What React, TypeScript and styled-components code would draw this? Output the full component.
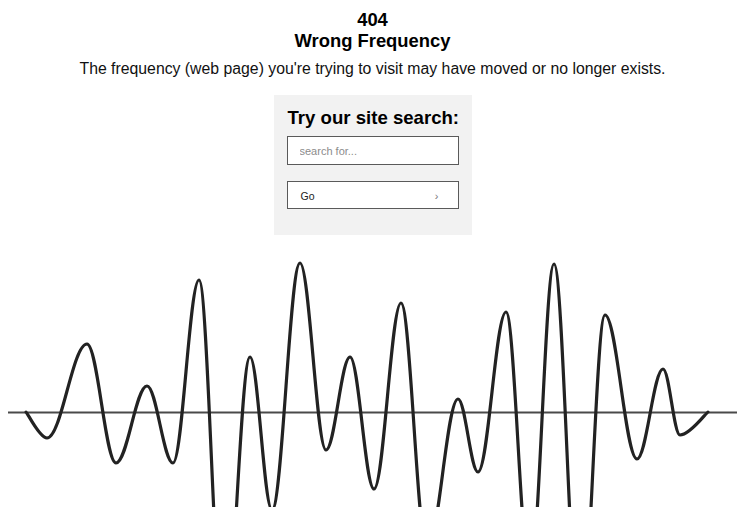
import React from "react";
import styled, { createGlobalStyle } from "styled-components";

const Global = createGlobalStyle`
  html, body { background: #fff; }
  body {
    margin: 8px;
    font-family: "Liberation Sans", Arial, sans-serif;
    color: #000;
  }
`;

const Page = styled.main`
  display: flex;
  flex-direction: column;
  align-items: center;
  padding-top: 2px;
`;

const Title = styled.h1<{ $gap?: number }>`
  margin: ${(p) => p.$gap ?? 0}px 0 0;
  font-size: 18.4px;
  line-height: 20px;
  font-weight: bold;
  text-align: center;
`;

const Lead = styled.p`
  margin: 9px 0 0;
  font-size: 15.8px;
  line-height: 18.4px;
  color: #111;
  text-align: center;
`;

const SearchBox = styled.form`
  margin-top: 17px;
  width: 198px;
  box-sizing: border-box;
  padding: 13px 13px 26px;
  background: #f2f2f2;
  display: flex;
  flex-direction: column;
`;

const SearchTitle = styled.h2`
  margin: 0 0 0 1px;
  font-size: 18.6px;
  line-height: 20px;
  font-weight: bold;
  white-space: nowrap;
`;

const Field = styled.input`
  margin-top: 8px;
  height: 29px;
  box-sizing: border-box;
  border: 1px solid #5a5a5a;
  background: #fff;
  padding: 1px 12px 0;
  font-family: inherit;
  font-size: 11px;
  color: #222;
  outline: none;
  &::placeholder { color: #8c8c8c; }
`;

const GoButton = styled.button`
  margin-top: 16px;
  height: 28px;
  box-sizing: border-box;
  border: 1px solid #5a5a5a;
  background: #fff;
  padding: 2px 19px 0 13px;
  display: flex;
  align-items: center;
  justify-content: space-between;
  font-family: inherit;
  font-size: 10.5px;
  color: #222;
  cursor: pointer;
`;

const Chevron = styled.span`
  color: #777;
  font-size: 11px;
`;

const WaveSvg = styled.svg`
  display: block;
  margin-top: 10px;
  width: 729px;
  height: 262px;
  align-self: stretch;
`;

const extrema: [number, number][] = [
  [26, 412], [47, 438], [87, 344], [116, 463], [147, 386], [173, 463],
  [199, 280], [224, 640], [250, 357], [272, 510], [300, 263], [326, 450],
  [350, 357], [374, 489], [401, 303], [427, 550], [458, 399], [478, 472],
  [506, 312], [530, 575], [554, 264], [580, 640], [605, 315], [637, 459],
  [663, 369], [680, 435], [708, 412],
];

function buildPath(pts: [number, number][]): string {
  let d = `M${pts[0][0]} ${pts[0][1]}`;
  for (let i = 1; i < pts.length; i++) {
    const [x0, y0] = pts[i - 1];
    const [x1, y1] = pts[i];
    const dx = x1 - x0;
    const a = i === 1 ? 0.05 : 0.364;
    const b = i === pts.length - 1 ? 0.05 : 0.364;
    d += ` C${(x0 + a * dx).toFixed(2)} ${y0} ${(x1 - b * dx).toFixed(2)} ${y1} ${x1} ${y1}`;
  }
  return d;
}

export default function App() {
  const d = buildPath(extrema);
  return (
    <>
      <Global />
      <Page>
        <Title>404</Title>
        <Title as="h2" $gap={1}>Wrong Frequency</Title>
        <Lead>The frequency (web page) you're trying to visit may have moved or no longer exists.</Lead>
        <SearchBox onSubmit={(e) => e.preventDefault()}>
          <SearchTitle>Try our site search:</SearchTitle>
          <Field type="text" placeholder="search for..." />
          <GoButton type="submit">
            <span>Go</span>
            <Chevron>›</Chevron>
          </GoButton>
        </SearchBox>
        <WaveSvg viewBox="8 245 729 262" aria-hidden="true">
          <line x1="8" y1="412.5" x2="738" y2="412.5" stroke="#4a4a4a" strokeWidth="2" />
          <path d={d} fill="none" stroke="#222" strokeWidth="3.2" strokeLinejoin="round" strokeLinecap="round" />
        </WaveSvg>
      </Page>
    </>
  );
}
